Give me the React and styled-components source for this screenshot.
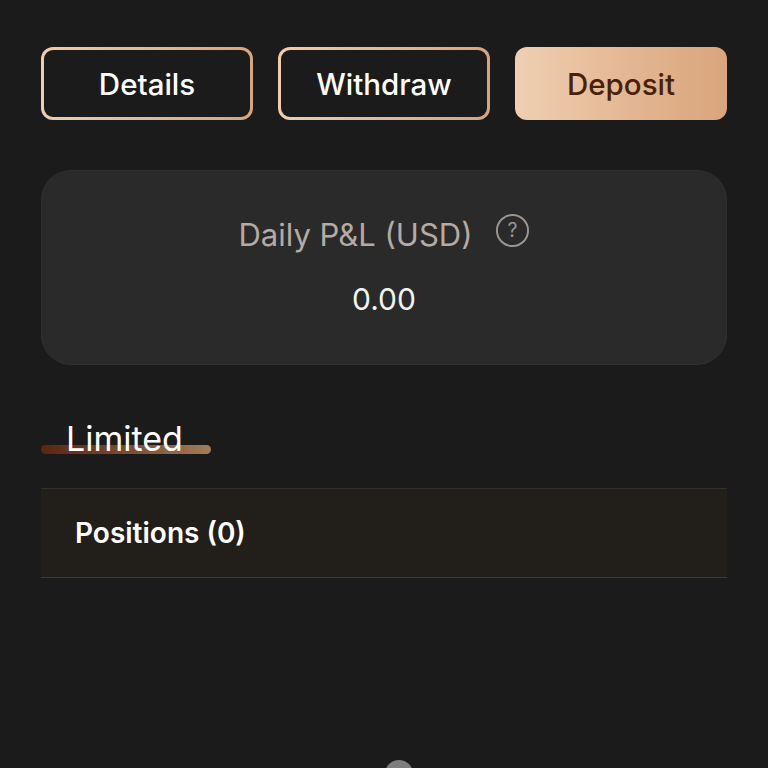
import React from "react";
import styled, { createGlobalStyle } from "styled-components";

const Global = createGlobalStyle`
  html, body {
    margin: 0;
    padding: 0;
    background: #1b1b1b;
    font-family: Inter, "Noto Sans", "Liberation Sans", sans-serif;
  }
`;

export default function App() {
  return (
    <Page>
      <Global />
      <ButtonRow>
        <ActionButton>Details</ActionButton>
        <ActionButton>Withdraw</ActionButton>
        <ActionButton primary>Deposit</ActionButton>
      </ButtonRow>
      <PnlCard>
        <PnlLabel>
          Daily P&amp;L (USD)
          <HelpIcon viewBox="0 0 36 36">
            <circle cx="18" cy="18" r="16" fill="none" stroke="#9a9590" strokeWidth="2" />
            <text x="18" y="25" textAnchor="middle" fontSize="20" fill="#9a9590" fontFamily="Inter, sans-serif">?</text>
          </HelpIcon>
        </PnlLabel>
        <PnlValue>0.00</PnlValue>
      </PnlCard>
      <TabTitle>
        <TabBar />
        <span>Limited</span>
      </TabTitle>
      <PositionsRow>Positions (0)</PositionsRow>
      <Handle />
    </Page>
  );
}

const Page = styled.div`
  position: relative;
  width: 768px;
  height: 768px;
  overflow: hidden;
  background: #1b1b1b;
  padding: 47px 41px 0;
  box-sizing: border-box;
`;

const ButtonRow = styled.div`
  display: grid;
  grid-template-columns: repeat(3, 1fr);
  gap: 25px;
`;

const ActionButton = styled.button`
  height: 73px;
  border-radius: 12px;
  font-family: inherit;
  font-size: 29.5px;
  font-weight: 500;
  cursor: pointer;
  border: ${(p) => (p.primary ? "none" : "3px solid transparent")};
  color: ${(p) => (p.primary ? "#4a1f0c" : "#ffffff")};
  background: ${(p) =>
    p.primary
      ? "linear-gradient(90deg, #efcfb2 0%, #e2b48f 60%, #d9a57c 100%)"
      : "linear-gradient(#1b1b1b, #1b1b1b) padding-box, linear-gradient(90deg, #f0cdae, #d7a47f) border-box"};
`;

const PnlCard = styled.div`
  margin-top: 50px;
  height: 195px;
  border-radius: 30px;
  background: #2a2a2a;
  border: 1px solid #303030;
  box-sizing: border-box;
  display: flex;
  flex-direction: column;
  align-items: center;
  padding-top: 45px;
`;

const PnlLabel = styled.div`
  display: flex;
  align-items: center;
  gap: 22px;
  font-size: 31px;
  color: #b3aba4;
`;

const HelpIcon = styled.svg`
  width: 35px;
  height: 35px;
  margin-top: -8px;
`;

const PnlValue = styled.div`
  margin-top: 28px;
  font-size: 30px;
  color: #f2f2f2;
`;

const TabTitle = styled.div`
  position: relative;
  margin-top: 56px;
  height: 40px;
  padding-left: 25px;
  span {
    position: relative;
    font-size: 34px;
    color: #ffffff;
    line-height: 36px;
  }
`;

const TabBar = styled.div`
  position: absolute;
  left: 0;
  top: 24px;
  width: 170px;
  height: 9px;
  border-radius: 5px;
  background: linear-gradient(90deg, #5a2614 0%, #7a4a30 50%, #a47c5a 100%);
`;

const PositionsRow = styled.div`
  margin-top: 27px;
  height: 90px;
  display: flex;
  align-items: center;
  padding-left: 34px;
  background: #221e19;
  border-top: 1px solid #34312d;
  border-bottom: 1px solid #3a3a38;
  font-size: 28px;
  font-weight: 600;
  color: #ffffff;
  box-sizing: border-box;
`;

const Handle = styled.div`
  position: absolute;
  left: 385px;
  top: 760px;
  width: 28px;
  height: 28px;
  border-radius: 50%;
  background: #7e7e7e;
`;
